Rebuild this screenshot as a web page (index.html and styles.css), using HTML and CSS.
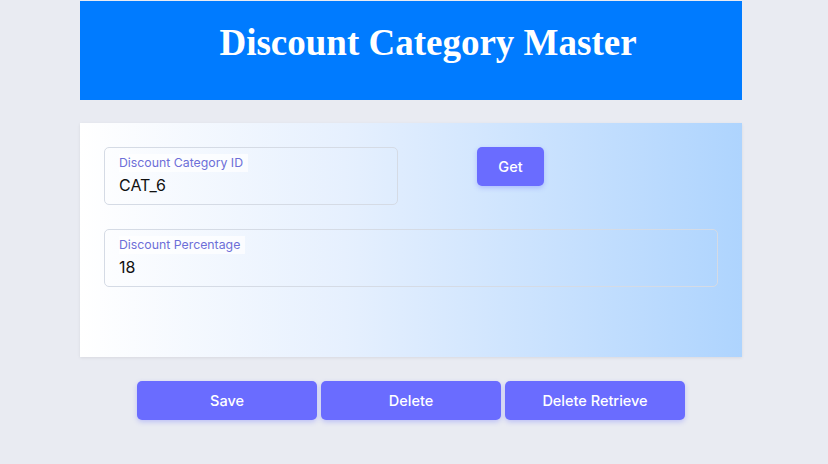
FILE: index.html
```html
<!DOCTYPE html>
<html>
<head>
<meta charset="utf-8">
<link rel="stylesheet" href="styles.css">
</head>
<body>
<div class="page">
  <header class="header"><h1 class="title">Discount Category Master</h1></header>
  <section class="card">
    <div class="row">
      <div class="field field-short">
        <span class="label">Discount Category ID</span>
        <span class="value">CAT_6</span>
      </div>
      <button class="btn btn-get">Get</button>
    </div>
    <div class="field field-full">
      <span class="label">Discount Percentage</span>
      <span class="value">18</span>
    </div>
  </section>
  <div class="actions">
    <button class="btn btn-action">Save</button>
    <button class="btn btn-action">Delete</button>
    <button class="btn btn-action">Delete Retrieve</button>
  </div>
</div>
</body>
</html>
```
FILE: styles.css
```css
html, body { margin: 0; padding: 0; }
body {
  background: #e9ebf2;
  font-family: Inter, "Noto Sans", "Liberation Sans", sans-serif;
  width: 828px;
  height: 464px;
  overflow: hidden;
}
.page {
  width: 662px;
  margin-left: 80px;
  padding-top: 1px;
}
.header {
  background: #007bff;
  height: 99px;
  box-sizing: border-box;
  padding-left: 34px;
  display: flex;
  justify-content: center;
}
.title {
  margin: 21px 0 0 0;
  color: #fff;
  font-family: "Liberation Serif", "Times New Roman", serif;
  font-weight: bold;
  font-size: 37px;
  line-height: 42px;
}
.card {
  margin-top: 23px;
  height: 234px;
  box-sizing: border-box;
  padding: 24px 24px;
  background: linear-gradient(90deg, #ffffff 0%, #e6f0fe 40%, #aed4fe 100%);
  box-shadow: 0 1px 3px rgba(0,0,0,0.08);
}
.row {
  display: flex;
  align-items: flex-start;
}
.field {
  box-sizing: border-box;
  height: 58px;
  border: 1px solid #d5dbe5;
  border-radius: 5px;
  padding: 6px 14px 0 14px;
  display: flex;
  flex-direction: column;
  align-items: flex-start;
}
.field-short { width: 294px; }
.field-full { width: 614px; margin-top: 24px; }
.label {
  font-size: 12.3px;
  color: #6d6fd8;
  background: rgba(255,255,255,0.7);
  line-height: 18px;
  padding-right: 5px;
}
.value {
  font-size: 16px;
  color: #111;
  line-height: 24px;
  margin-top: 1px;
}
.btn {
  border: none;
  background: #6a6cff;
  color: #fff;
  font-family: Inter, "Noto Sans", "Liberation Sans", sans-serif;
  font-weight: 500;
  font-size: 14.5px;
  border-radius: 5px;
  box-shadow: 0 2px 5px rgba(90,95,255,0.3);
}
.btn-get {
  width: 67px;
  height: 39px;
  margin-left: 79px;
}
.actions {
  display: flex;
  justify-content: center;
  gap: 4px;
  margin-top: 24px;
}
.btn-action {
  width: 180px;
  height: 39px;
}
```
